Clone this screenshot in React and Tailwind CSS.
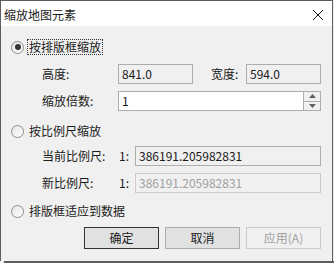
import React from "react";

const font = { fontFamily: '"Noto Sans CJK SC", "Noto Sans", sans-serif' };

function Radio({ checked, label, focus }) {
  return (
    <div className="flex items-center h-[20px] pl-[10px]">
      <div className="w-[13px] h-[13px] rounded-full border border-[#8c8c8c] bg-gradient-to-br from-[#e6e6e6] to-white flex items-center justify-center">
        {checked && <div className="w-[6px] h-[6px] rounded-full bg-[#333333]" />}
      </div>
      <div
        className={
          "ml-[3px] h-[16px] flex items-center px-[1px] text-[12px] text-[#1a1a1a] leading-none " +
          (focus ? "border border-dotted border-[#333]" : "border border-transparent")
        }
      >
        {label}
      </div>
    </div>
  );
}

function Field({ value, w, disabled, white }) {
  return (
    <div
      className={
        "h-[20px] flex items-center pl-[3px] text-[12px] leading-none border " +
        w +
        " " +
        (disabled
          ? "border-[#cccccc] text-[#a0a0a0] bg-[#f0f0f0]"
          : white
          ? "border-[#adadad] text-[#1a1a1a] bg-white"
          : "border-[#adadad] text-[#1a1a1a] bg-[#f0f0f0]")
      }
    >
      {value}
    </div>
  );
}

function Btn({ label, primary, disabled }) {
  return (
    <div
      className={
        "w-[75px] h-[22px] flex items-center justify-center text-[12px] leading-none border " +
        (primary
          ? "border-[#333333] bg-[#e1e1e1] text-[#1a1a1a]"
          : disabled
          ? "border-[#cccccc] bg-[#f0f0f0] text-[#a0a0a0]"
          : "border-[#adadad] bg-[#e1e1e1] text-[#1a1a1a]")
      }
    >
      {label}
    </div>
  );
}

export default function App() {
  return (
    <div className="w-[334px] h-[263px] bg-[#f0f0f0] flex flex-col" style={font}>
      <div className="w-[333px] h-[261px] border-l border-t border-r border-[#5c5c5c] flex flex-col bg-[#f0f0f0]">
        <div className="h-[25px] bg-white flex items-center justify-between pl-[3px] pr-[8px] shrink-0">
          <span className="text-[12px] text-[#1a1a1a] leading-none mt-[2px]">缩放地图元素</span>
          <svg width="12" height="12" viewBox="0 0 12 12" className="mt-[2px]">
            <path d="M1 1 L11 11 M11 1 L1 11" stroke="#111" strokeWidth="1" fill="none" />
          </svg>
        </div>
        <div className="flex flex-col">
          <div className="mt-[11px]">
            <Radio checked focus label="按排版框缩放" />
          </div>
          <div className="mt-[7px] flex items-center">
            <span className="ml-[41px] w-[76px] text-[12px] text-[#1a1a1a]">高度:</span>
            <Field value="841.0" w="w-[75px]" />
            <span className="ml-[18px] w-[35px] text-[12px] text-[#1a1a1a]">宽度:</span>
            <Field value="594.0" w="w-[75px]" />
          </div>
          <div className="mt-[7px] flex items-center">
            <span className="ml-[41px] w-[76px] text-[12px] text-[#1a1a1a]">缩放倍数:</span>
            <div className="w-[203px] h-[20px] border border-[#adadad] bg-white flex">
              <div className="flex-1 flex items-center pl-[3px] text-[12px] text-[#1a1a1a] leading-none">1</div>
              <div className="w-[17px] flex flex-col border-l border-[#adadad] bg-[#f0f0f0]">
                <div className="flex-1 flex items-center justify-center border-b border-[#adadad]">
                  <svg width="7" height="4" viewBox="0 0 7 4"><path d="M0 4 L3.5 0 L7 4 Z" fill="#606060" /></svg>
                </div>
                <div className="flex-1 flex items-center justify-center">
                  <svg width="7" height="4" viewBox="0 0 7 4"><path d="M0 0 L3.5 4 L7 0 Z" fill="#606060" /></svg>
                </div>
              </div>
            </div>
          </div>
          <div className="mt-[10px]">
            <Radio label="按比例尺缩放" />
          </div>
          <div className="mt-[5px] flex items-center">
            <span className="ml-[41px] w-[77px] text-[12px] text-[#1a1a1a]">当前比例尺:</span>
            <span className="w-[16px] text-[12px] text-[#1a1a1a]">1:</span>
            <Field value="386191.205982831" w="w-[186px]" />
          </div>
          <div className="mt-[7px] flex items-center">
            <span className="ml-[41px] w-[77px] text-[12px] text-[#1a1a1a]">新比例尺:</span>
            <span className="w-[16px] text-[12px] text-[#1a1a1a]">1:</span>
            <Field value="386191.205982831" w="w-[186px]" disabled />
          </div>
          <div className="mt-[8px]">
            <Radio label="排版框适应到数据" />
          </div>
          <div className="mt-[6px] flex justify-end gap-[6px] pr-[11px]">
            <Btn label="确定" primary />
            <Btn label="取消" />
            <Btn label="应用(A)" disabled />
          </div>
        </div>
      </div>
      <div className="h-[2px] bg-[#5c5c5c] ml-[4px]" />
    </div>
  );
}
